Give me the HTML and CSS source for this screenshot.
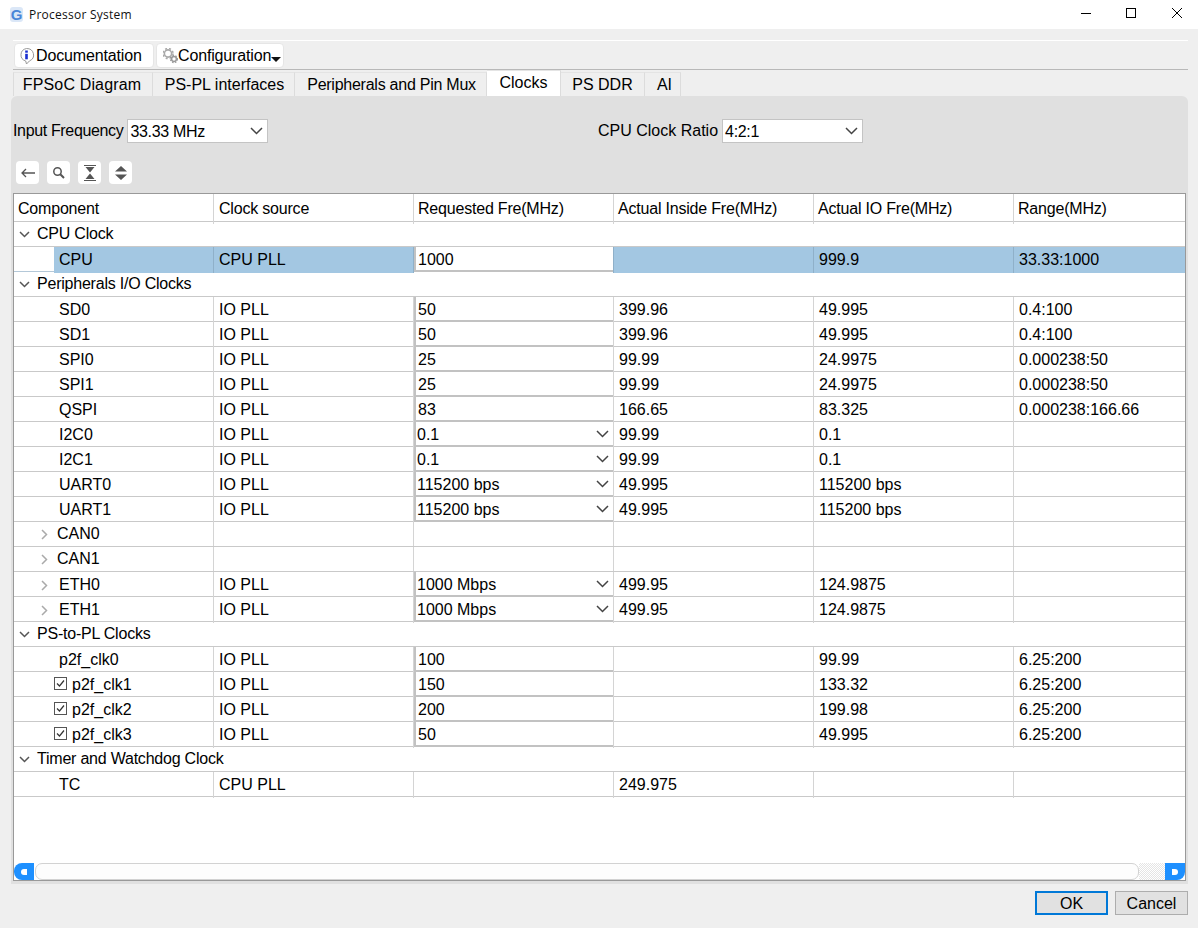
FILE: index.html
```html
<!DOCTYPE html>
<html lang="en">
<head>
<meta charset="utf-8">
<title>Processor System</title>
<link rel="stylesheet" href="styles.css">
</head>
<body>
<header class="titlebar">
  <span class="app-icon">G</span>
  <span class="app-title">Processor System</span>
  <div class="win-controls">
    <svg class="win-btn" width="46" height="29" viewBox="0 0 46 29"><path d="M21 13.500h10" stroke="#000" fill="none"/></svg>
    <svg class="win-btn" width="46" height="29" viewBox="0 0 46 29"><rect x="20.500" y="8.500" width="9" height="9" stroke="#000" fill="none"/></svg>
    <svg class="win-btn" width="46" height="29" viewBox="0 0 46 29"><path d="M20 8l10 10M30 8L20 18" stroke="#000" fill="none"/></svg>
  </div>
</header>

<main class="main">
  <nav class="top-tools">
    <div class="tool-tab">
      <svg width="17" height="18" viewBox="0 0 17 18"><path d="M8.500 1.500a7 6.500 0 0 1 3 12.400L8.500 17l-.8-3A7 6.500 0 0 1 8.500 1.500z" fill="#fff" stroke="#999"/><rect x="7.200" y="3.500" width="2.600" height="2.200" fill="#1a2fd0"/><rect x="7.200" y="6.800" width="2.600" height="5.500" fill="#1a2fd0"/></svg>
      <span>Documentation</span>
    </div>
    <div class="tool-tab tool-tab-config">
      <svg width="15" height="16" viewBox="0 0 15 16"><circle cx="5" cy="5.500" r="3.600" fill="none" stroke="#aaa" stroke-width="1.600"/><circle cx="5" cy="5.500" r="5" fill="none" stroke="#aaa" stroke-width="1.500" stroke-dasharray="2 2"/><circle cx="11" cy="11" r="2.400" fill="none" stroke="#999" stroke-width="1.500"/><circle cx="11" cy="11" r="3.600" fill="none" stroke="#999" stroke-width="1.200" stroke-dasharray="1.500 1.500"/></svg>
      <span>Configuration</span>
      <span class="caret"></span>
    </div>
  </nav>

  <nav class="tabs">
    <div class="tab tab-1">FPSoC Diagram</div>
    <div class="tab tab-2">PS-PL interfaces</div>
    <div class="tab tab-3">Peripherals and Pin Mux</div>
    <div class="tab tab-4 tab-active">Clocks</div>
    <div class="tab tab-5">PS DDR</div>
    <div class="tab tab-6">AI</div>
  </nav>

  <section class="panel">
    <div class="form-row">
      <div class="form-item">
        <label class="form-label form-label-tight">Input Frequency</label>
        <div class="combo"><span class="combo-text">33.33 MHz</span><svg class="chev" width="13" height="8" viewBox="0 0 13 8"><path d="M1 1l5.500 5.500L12 1" fill="none" stroke="#444" stroke-width="1.500"/></svg></div>
      </div>
      <div class="form-item">
        <label class="form-label">CPU Clock Ratio</label>
        <div class="combo"><span class="combo-text">4:2:1</span><svg class="chev" width="13" height="8" viewBox="0 0 13 8"><path d="M1 1l5.500 5.500L12 1" fill="none" stroke="#444" stroke-width="1.500"/></svg></div>
      </div>
    </div>

    <div class="icon-bar">
      <button class="icon-btn"><svg width="16" height="12" viewBox="0 0 16 12"><path d="M15 6H2M6 2L2 6l4 4" fill="none" stroke="#555" stroke-width="1.300"/></svg></button>
      <button class="icon-btn"><svg width="13" height="13" viewBox="0 0 13 13"><circle cx="5.500" cy="5.500" r="3.700" fill="none" stroke="#555" stroke-width="1.500"/><path d="M8.300 8.300L12 12" stroke="#555" stroke-width="2"/></svg></button>
      <button class="icon-btn"><svg width="12" height="16" viewBox="0 0 12 16"><path d="M0 .5h12M0 15.500h12" stroke="#555"/><path d="M1.500 2h9L6 7.500zM1.500 14h9L6 8.500z" fill="#555"/></svg></button>
      <button class="icon-btn"><svg width="12" height="14" viewBox="0 0 12 14"><path d="M6 0l6 5.500H0zM6 14L0 8.500h12z" fill="#555"/></svg></button>
    </div>

    <div class="grid-box">
      <div class="row row-head">
        <div class="cell cell-first">Component</div><div class="cell">Clock source</div><div class="cell">Requested Fre(MHz)</div><div class="cell">Actual Inside Fre(MHz)</div><div class="cell">Actual IO Fre(MHz)</div><div class="cell">Range(MHz)</div>
      </div>

      <div class="row row-group"><svg class="exp" width="11" height="7" viewBox="0 0 11 7"><path d="M1 1l4.500 4.500L10 1" fill="none" stroke="#555" stroke-width="1.500"/></svg><span>CPU Clock</span></div>
      <div class="row row-sel">
        <div class="cell cell-name cell-sel-name">CPU</div><div class="cell">CPU PLL</div><div class="cell cell-field"><div class="field">1000</div></div><div class="cell"></div><div class="cell">999.9</div><div class="cell">33.33:1000</div>
      </div>

      <div class="row row-group"><svg class="exp" width="11" height="7" viewBox="0 0 11 7"><path d="M1 1l4.500 4.500L10 1" fill="none" stroke="#555" stroke-width="1.500"/></svg><span>Peripherals I/O Clocks</span></div>
      <div class="row"><div class="cell cell-name">SD0</div><div class="cell">IO PLL</div><div class="cell cell-field"><div class="field">50</div></div><div class="cell">399.96</div><div class="cell">49.995</div><div class="cell">0.4:100</div></div>
      <div class="row"><div class="cell cell-name">SD1</div><div class="cell">IO PLL</div><div class="cell cell-field"><div class="field">50</div></div><div class="cell">399.96</div><div class="cell">49.995</div><div class="cell">0.4:100</div></div>
      <div class="row"><div class="cell cell-name">SPI0</div><div class="cell">IO PLL</div><div class="cell cell-field"><div class="field">25</div></div><div class="cell">99.99</div><div class="cell">24.9975</div><div class="cell">0.000238:50</div></div>
      <div class="row"><div class="cell cell-name">SPI1</div><div class="cell">IO PLL</div><div class="cell cell-field"><div class="field">25</div></div><div class="cell">99.99</div><div class="cell">24.9975</div><div class="cell">0.000238:50</div></div>
      <div class="row"><div class="cell cell-name">QSPI</div><div class="cell">IO PLL</div><div class="cell cell-field"><div class="field">83</div></div><div class="cell">166.65</div><div class="cell">83.325</div><div class="cell">0.000238:166.66</div></div>
      <div class="row"><div class="cell cell-name">I2C0</div><div class="cell">IO PLL</div><div class="cell cell-field"><div class="field field-select"><span>0.1</span><svg width="13" height="8" viewBox="0 0 13 8"><path d="M1 1l5.500 5.500L12 1" fill="none" stroke="#444" stroke-width="1.500"/></svg></div></div><div class="cell">99.99</div><div class="cell">0.1</div><div class="cell"></div></div>
      <div class="row"><div class="cell cell-name">I2C1</div><div class="cell">IO PLL</div><div class="cell cell-field"><div class="field field-select"><span>0.1</span><svg width="13" height="8" viewBox="0 0 13 8"><path d="M1 1l5.500 5.500L12 1" fill="none" stroke="#444" stroke-width="1.500"/></svg></div></div><div class="cell">99.99</div><div class="cell">0.1</div><div class="cell"></div></div>
      <div class="row"><div class="cell cell-name">UART0</div><div class="cell">IO PLL</div><div class="cell cell-field"><div class="field field-select"><span>115200 bps</span><svg width="13" height="8" viewBox="0 0 13 8"><path d="M1 1l5.500 5.500L12 1" fill="none" stroke="#444" stroke-width="1.500"/></svg></div></div><div class="cell">49.995</div><div class="cell">115200 bps</div><div class="cell"></div></div>
      <div class="row"><div class="cell cell-name">UART1</div><div class="cell">IO PLL</div><div class="cell cell-field"><div class="field field-select"><span>115200 bps</span><svg width="13" height="8" viewBox="0 0 13 8"><path d="M1 1l5.500 5.500L12 1" fill="none" stroke="#444" stroke-width="1.500"/></svg></div></div><div class="cell">49.995</div><div class="cell">115200 bps</div><div class="cell"></div></div>
      <div class="row"><div class="cell cell-sub"><svg class="exp-side" width="7" height="11" viewBox="0 0 7 11"><path d="M1 1l4.500 4.500L1 10" fill="none" stroke="#aaa" stroke-width="1.500"/></svg><span>CAN0</span></div><div class="cell"></div><div class="cell"></div><div class="cell"></div><div class="cell"></div><div class="cell"></div></div>
      <div class="row"><div class="cell cell-sub"><svg class="exp-side" width="7" height="11" viewBox="0 0 7 11"><path d="M1 1l4.500 4.500L1 10" fill="none" stroke="#aaa" stroke-width="1.500"/></svg><span>CAN1</span></div><div class="cell"></div><div class="cell"></div><div class="cell"></div><div class="cell"></div><div class="cell"></div></div>
      <div class="row"><div class="cell cell-sub cell-sub-eth"><svg class="exp-side" width="7" height="11" viewBox="0 0 7 11"><path d="M1 1l4.500 4.500L1 10" fill="none" stroke="#aaa" stroke-width="1.500"/></svg><span>ETH0</span></div><div class="cell">IO PLL</div><div class="cell cell-field"><div class="field field-select"><span>1000 Mbps</span><svg width="13" height="8" viewBox="0 0 13 8"><path d="M1 1l5.500 5.500L12 1" fill="none" stroke="#444" stroke-width="1.500"/></svg></div></div><div class="cell">499.95</div><div class="cell">124.9875</div><div class="cell"></div></div>
      <div class="row"><div class="cell cell-sub cell-sub-eth"><svg class="exp-side" width="7" height="11" viewBox="0 0 7 11"><path d="M1 1l4.500 4.500L1 10" fill="none" stroke="#aaa" stroke-width="1.500"/></svg><span>ETH1</span></div><div class="cell">IO PLL</div><div class="cell cell-field"><div class="field field-select"><span>1000 Mbps</span><svg width="13" height="8" viewBox="0 0 13 8"><path d="M1 1l5.500 5.500L12 1" fill="none" stroke="#444" stroke-width="1.500"/></svg></div></div><div class="cell">499.95</div><div class="cell">124.9875</div><div class="cell"></div></div>

      <div class="row row-group"><svg class="exp" width="11" height="7" viewBox="0 0 11 7"><path d="M1 1l4.500 4.500L10 1" fill="none" stroke="#555" stroke-width="1.500"/></svg><span>PS-to-PL Clocks</span></div>
      <div class="row"><div class="cell cell-name">p2f_clk0</div><div class="cell">IO PLL</div><div class="cell cell-field"><div class="field">100</div></div><div class="cell"></div><div class="cell">99.99</div><div class="cell">6.25:200</div></div>
      <div class="row"><div class="cell cell-check"><svg width="13" height="13" viewBox="0 0 13 13"><rect x=".5" y=".5" width="12" height="12" fill="#fff" stroke="#555"/><path d="M3 6.500l2.500 2.500L10 3.500" fill="none" stroke="#333" stroke-width="1.200"/></svg><span>p2f_clk1</span></div><div class="cell">IO PLL</div><div class="cell cell-field"><div class="field">150</div></div><div class="cell"></div><div class="cell">133.32</div><div class="cell">6.25:200</div></div>
      <div class="row"><div class="cell cell-check"><svg width="13" height="13" viewBox="0 0 13 13"><rect x=".5" y=".5" width="12" height="12" fill="#fff" stroke="#555"/><path d="M3 6.500l2.500 2.500L10 3.500" fill="none" stroke="#333" stroke-width="1.200"/></svg><span>p2f_clk2</span></div><div class="cell">IO PLL</div><div class="cell cell-field"><div class="field">200</div></div><div class="cell"></div><div class="cell">199.98</div><div class="cell">6.25:200</div></div>
      <div class="row"><div class="cell cell-check"><svg width="13" height="13" viewBox="0 0 13 13"><rect x=".5" y=".5" width="12" height="12" fill="#fff" stroke="#555"/><path d="M3 6.500l2.500 2.500L10 3.500" fill="none" stroke="#333" stroke-width="1.200"/></svg><span>p2f_clk3</span></div><div class="cell">IO PLL</div><div class="cell cell-field"><div class="field">50</div></div><div class="cell"></div><div class="cell">49.995</div><div class="cell">6.25:200</div></div>

      <div class="row row-group"><svg class="exp" width="11" height="7" viewBox="0 0 11 7"><path d="M1 1l4.500 4.500L10 1" fill="none" stroke="#555" stroke-width="1.500"/></svg><span>Timer and Watchdog Clock</span></div>
      <div class="row"><div class="cell cell-name">TC</div><div class="cell">CPU PLL</div><div class="cell"></div><div class="cell">249.975</div><div class="cell"></div><div class="cell"></div></div>

      <div class="grid-spacer"></div>
      <div class="scrollbar">
        <div class="scroll-btn scroll-left"><span class="scroll-arrow"></span></div>
        <div class="scroll-thumb"></div>
        <div class="scroll-track"></div>
        <div class="scroll-btn scroll-right"><span class="scroll-arrow"></span></div>
      </div>
    </div>
  </section>

  <footer class="footer">
    <button class="btn btn-default">OK</button>
    <button class="btn">Cancel</button>
  </footer>
</main>
</body>
</html>
```
FILE: styles.css
```css
* { box-sizing: border-box; }
html, body { margin: 0; padding: 0; }
body {
  width: 1198px;
  height: 928px;
  overflow: hidden;
  background: #efefef;
  color: #000;
  font-family: "Liberation Sans", Arial, sans-serif;
  font-size: 16px;
}

/* Title bar */
.titlebar {
  height: 29px;
  background: #fff;
  display: flex;
  align-items: center;
  padding-left: 10px;
}
.app-icon {
  width: 13px;
  height: 15px;
  margin-right: 6px;
  border-radius: 3px;
  background: #dbe7f7;
  color: #4a86d8;
  font-size: 15px;
  font-weight: bold;
  line-height: 15px;
  text-align: center;
}
.app-title {
  font-family: "Open Sans", sans-serif;
  font-size: 12px;
  letter-spacing: 0.25px;
  color: #111;
}
.win-controls { margin-left: auto; display: flex; }
.win-btn { display: block; }

/* Main */
.main { padding: 11px 10px 0 11px; }
.top-tools {
  margin-left: 2px;
  height: 30px;
  border-top: 1px solid #fff;
  border-bottom: 1px solid #b8b8b8;
  display: flex;
  align-items: flex-start;
  gap: 2px;
  padding: 2px 0 0 1px;
}
.tool-tab {
  height: 25px;
  background: #fff;
  border: 1px solid #e6e6e6;
  border-radius: 4px;
  display: flex;
  align-items: center;
  padding-left: 3px;
  width: 140px;
  letter-spacing: -0.15px;
  white-space: nowrap;
}
.tool-tab svg { margin-right: 1px; flex: none; }
.tool-tab-config { width: 128px; padding-left: 6px; }
.tool-tab-config svg { margin-right: 0; }
.caret {
  width: 0;
  height: 0;
  margin: 8px 0 0 0;
  border-left: 5px solid transparent;
  border-right: 5px solid transparent;
  border-top: 5px solid #111;
}

/* Tabs */
.tabs {
  margin-left: 2px;
  height: 26px;
  display: flex;
  align-items: flex-end;
}
.tab {
  height: 24px;
  border-right: 1px solid #dcdcdc;
  border-top: 1px solid #e4e4e4;
  text-align: center;
  line-height: 23px;
  white-space: nowrap;
}
.tab-1 { width: 140px; border-left: 1px solid #dcdcdc; padding-right: 2px; letter-spacing: 0.15px; }
.tab-2 { width: 142px; padding-left: 2px; }
.tab-3 { width: 192px; padding-left: 2px; letter-spacing: -0.25px; }
.tab-4 { width: 74px; }
.tab-5 { width: 84px; }
.tab-6 { width: 36px; padding-left: 4px; }
.tab-active { height: 26px; background: #fff; }

/* Panel */
.panel {
  height: 788px;
  background: #e0e0e0;
  border-radius: 6px 6px 0 0;
  padding: 23px 2px 0 2px;
}
.form-row { display: flex; height: 24px; }
.form-item { width: 585px; display: flex; align-items: center; gap: 4px; }
.form-label { white-space: nowrap; line-height: 26px; }
.form-label-tight { letter-spacing: -0.35px; }
.combo {
  width: 141px;
  height: 24px;
  background: #fff;
  border: 1px solid #c4c4c4;
  display: flex;
  align-items: center;
  justify-content: space-between;
  padding: 0 3px 0 2px;
}
.combo-text { line-height: 24px; padding-top: 2px; letter-spacing: -0.3px; }
.combo .chev { margin-right: 1px; }

.icon-bar { display: flex; gap: 8px; margin: 18px 0 9px 3px; height: 23px; }
.icon-btn {
  width: 23px;
  height: 23px;
  padding: 0;
  border: 0;
  border-radius: 4px;
  background: #fff;
  display: flex;
  align-items: center;
  justify-content: center;
}

/* Grid */
.grid-box {
  width: 1173px;
  height: 688px;
  background: #fff;
  border: 1px solid #999;
  display: flex;
  flex-direction: column;
}
.row {
  flex: none;
  height: 25px;
  display: grid;
  grid-template-columns: 200px 200px 200px 200px 200px 1fr;
  border-bottom: 1px solid #c9c9c9;
  line-height: 26px;
}
.row-head { height: 28px; line-height: 30px; letter-spacing: -0.2px; }
.row-head .cell { padding-left: 4px; }
.row-head .cell:nth-child(2) { padding-left: 5px; }
.cell {
  min-width: 0;
  padding-left: 5px;
  border-right: 1px solid #d4d4d4;
  white-space: nowrap;
}
.cell:last-child { border-right: 0; }
.cell-name { padding-left: 45px; }
.cell-sub, .cell-check { display: flex; align-items: center; line-height: 24px; }
.cell-sub { padding-left: 27px; }
.exp-side { margin-right: 9px; flex: none; }
.cell-sub-eth span { margin-left: 2px; }
.cell-check { padding-left: 40px; }
.cell-check svg { margin-top: -3px; }
.cell-check span { margin-left: 5px; }
.row-group {
  display: flex;
  align-items: center;
  padding-left: 5px;
  line-height: 24px;
  letter-spacing: -0.22px;
}
.exp { margin-right: 7px; flex: none; }

.cell-field { padding: 0; }
.field {
  height: 25px;
  background: #fff;
  border-left: 2px solid #c2c2c2;
  border-bottom: 2px solid #c2c2c2;
  padding-left: 2px;
  line-height: 26px;
}
.field-select {
  display: flex;
  align-items: center;
  justify-content: space-between;
  padding: 0 4px 0 1px;
}
.field-select span { padding-top: 2px; line-height: 24px; }
.row-sel { border-bottom-color: #b4c8d8; }
.row-sel .cell { background: #a3c7e2; border-right-color: #8fb0c9; }
.row-sel .cell-field { background: #fff; }
.cell-sel-name { margin-left: 40px; padding-left: 5px; }

.grid-spacer { flex: 1; }
.scrollbar { height: 17px; flex: none; display: flex; background: #fff; }
.scroll-btn {
  width: 20px;
  background: #1e90ff;
  display: flex;
  align-items: center;
  justify-content: center;
}
.scroll-left { border-radius: 8px 0 0 8px; }
.scroll-right { border-radius: 0 0 8px 0; }
.scroll-arrow { width: 6px; height: 6px; background: #fff; }
.scroll-left .scroll-arrow { border-radius: 3px 0 0 3px; }
.scroll-right .scroll-arrow { border-radius: 0 3px 3px 0; }
.scroll-thumb {
  width: 1104px;
  margin-left: 1px;
  background: #fdfdfd;
  border: 1px solid #d2d2d2;
  border-radius: 7px;
}
.scroll-track {
  flex: 1;
  background: repeating-conic-gradient(#e4e4e4 0 25%, #fff 0 50%) 0 0 / 2px 2px;
}

/* Footer */
.footer { display: flex; justify-content: flex-end; gap: 7px; padding-top: 7px; }
.btn {
  width: 73px;
  height: 24px;
  padding: 1px 0 0;
  background: #e1e1e1;
  border: 1px solid #adadad;
  font: inherit;
  color: #000;
}
.btn-default { border: 2px solid #0078d7; }
```
